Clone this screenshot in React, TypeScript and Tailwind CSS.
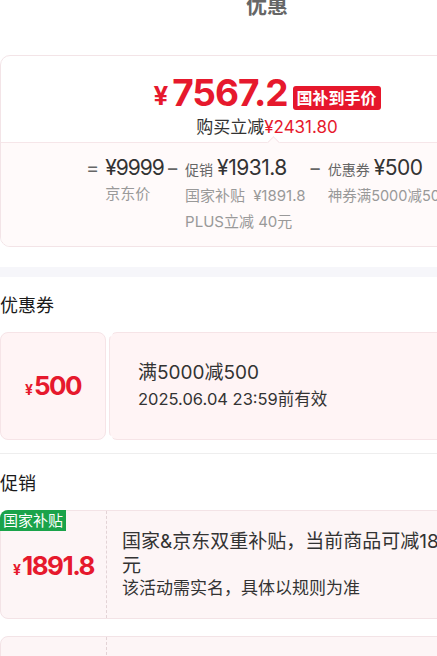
const red = "text-[#e6192d]";

const Op = ({ children }: { children: React.ReactNode }) => (
  <span className="text-[20px] leading-[26px] text-[#666]">{children}</span>
);

export default function App() {
  return (
    <div className="w-[437px] h-[656px] overflow-hidden bg-white font-['Inter','Noto_Sans_CJK_SC',sans-serif] text-[#1a1a1a]">
      <div className="w-[534px]">
        {/* header */}
        <div className="h-[55px] flex justify-center">
          <h1 className="-mt-[5px] text-[21px] leading-none font-bold text-[#666]">优惠</h1>
        </div>

        {/* price summary card */}
        <div className="h-[192px] rounded-[10px] border border-[#f3e4e7] flex flex-col overflow-hidden">
          <div className="h-[86px] flex flex-col items-center pt-[18px]">
            <div className="flex items-end">
              <span className={`${red} font-bold text-[26px] leading-none mb-[2px]`}>¥</span>
              <span className={`${red} font-bold text-[37px] leading-none ml-[4px] tracking-[-1px]`}>7567.2</span>
              <span className="ml-[5px] mb-[1px] bg-[#e6172c] text-white text-[16px] font-bold leading-[24px] px-[4px] rounded-[3px]">
                国补到手价
              </span>
            </div>
            <div className="mt-[6px] text-[17px] leading-[20px] text-[#333]">
              购买立减<span className={red}>¥2431.80</span>
            </div>
          </div>
          <div className="relative flex-1 bg-[#fffafa] border-t border-[#f6e6e9]">
            <div className="absolute -top-[5px] left-[268px] w-[9px] h-[9px] rotate-45 bg-[#fffafa] border-l border-t border-[#f6e6e9]" />
            <div className="flex gap-[6px] pt-[12px] pl-[85px]">
              <Op>=</Op>
              <div className="mr-[-4px]">
                <div className="text-[21px] leading-[26px] tracking-[-1px] text-[#333]">¥9999</div>
                <div className="text-[15px] leading-[26px] text-[#999]">京东价</div>
              </div>
              <Op>−</Op>
              <div className="mr-[-3px]">
                <div className="flex items-baseline gap-[4px] leading-[26px]">
                  <span className="text-[14px] text-[#666]">促销</span>
                  <span className="text-[21px] tracking-[-0.5px] text-[#333]">¥1931.8</span>
                </div>
                <div className="text-[15px] leading-[26px] text-[#999]">
                  国家补贴<span className="ml-[8px]">¥1891.8</span>
                </div>
                <div className="text-[15px] leading-[26px] text-[#999]">PLUS立减 40元</div>
              </div>
              <Op>−</Op>
              <div>
                <div className="flex items-baseline gap-[4px] leading-[26px]">
                  <span className="text-[14px] text-[#666]">优惠券</span>
                  <span className="text-[21px] tracking-[-0.5px] text-[#333]">¥500</span>
                </div>
                <div className="text-[14.5px] leading-[26px] text-[#999]">神券满5000减500</div>
              </div>
            </div>
          </div>
        </div>

        <div className="mt-[20px] h-[10px] bg-[#f6f6fa]" />

        {/* coupons */}
        <div className="h-[55px] pt-[17px]">
          <h2 className="text-[18px] leading-[24px]">优惠券</h2>
        </div>
        <div className="relative flex gap-[3px] h-[108px]">
          <div className="w-[106px] rounded-[8px] border border-[#f6e4e7] bg-[#fff4f5] flex items-center justify-center">
            <span className={`${red} font-bold text-[14px] mt-[7px] mr-[1px]`}>¥</span>
            <span className={`${red} font-bold text-[26px] leading-none tracking-[-1.5px]`}>500</span>
          </div>
          <div className="flex-1 rounded-[8px] border border-[#f6e4e7] bg-[#fff4f5] pl-[28px] flex flex-col justify-center text-[#333]">
            <div className="text-[19px] leading-[27px]">满5000减500</div>
            <div className="text-[16.5px] leading-[27px]">2025.06.04 23:59前有效</div>
          </div>
          <div className="absolute -top-[4px] left-[104px] w-[9px] h-[9px] rounded-full bg-white" />
          <div className="absolute -bottom-[4px] left-[104px] w-[9px] h-[9px] rounded-full bg-white" />
        </div>

        <div className="mt-[13px] h-px bg-[#eeeeee]" />

        {/* promotions */}
        <div className="h-[56px] pt-[18px]">
          <h2 className="text-[18px] leading-[24px]">促销</h2>
        </div>
        <div className="relative h-[109px] rounded-[8px] border border-[#f3e3e6] bg-[#fdf5f6] flex">
          <span className="absolute -top-px -left-px bg-[#1aa34a] text-white text-[15px] leading-[21px] px-[3px] rounded-tl-[8px]">
            国家补贴
          </span>
          <div className="w-[106px] border-r border-dashed border-[#e3d3d6] flex items-center justify-center pt-[2px]">
            <span className={`${red} font-bold text-[14px] mt-[7px] mr-[1px]`}>¥</span>
            <span className={`${red} font-bold text-[26px] leading-none tracking-[-1.5px]`}>1891.8</span>
          </div>
          <div className="pl-[15px] pt-[19px] text-[#333]">
            <p className="w-[362px] text-[19px] leading-[24px]">国家&amp;京东双重补贴，当前商品可减1891.8元</p>
            <p className="text-[17px] leading-[18px] mt-[1px]">该活动需实名，具体以规则为准</p>
          </div>
        </div>

        <div className="mt-[17px] h-[60px] rounded-[8px] border border-[#f3e3e6] bg-[#fdf5f6] flex">
          <div className="w-[106px] border-r border-dashed border-[#e3d3d6]" />
        </div>
      </div>
    </div>
  );
}
